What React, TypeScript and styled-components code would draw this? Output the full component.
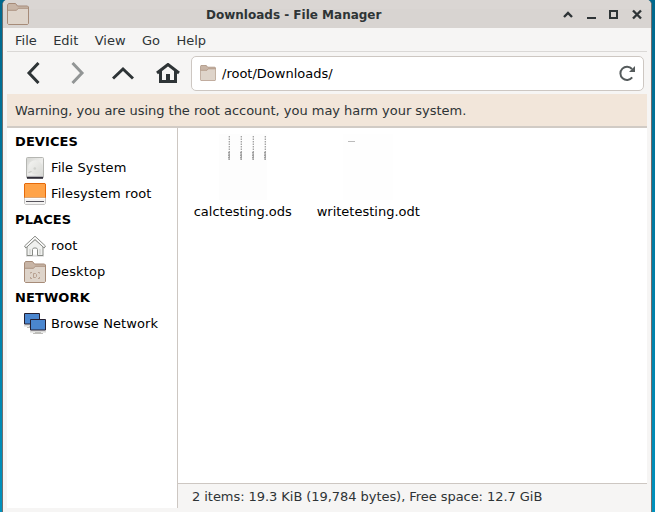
import React from "react";
import styled, { createGlobalStyle } from "styled-components";

const GlobalStyle = createGlobalStyle`
  * { box-sizing: border-box; }
  html, body { margin: 0; overflow: hidden; }
  body { font: 13px "DejaVu Sans", sans-serif; color: #2e3436; }
  svg { display: block; flex: none; }
`;

const Desktop = styled.div`
  width: 655px;
  height: 512px;
  padding: 0 3px 0 2px;
  background: linear-gradient(#00688d, #0091bd);
`;

const Window = styled.div`
  height: 512px;
  display: flex;
  flex-direction: column;
  background: #f6f5f4;
  border: solid #6f6d6c;
  border-width: 0 1px;
  border-radius: 5px 5px 0 0;
  overflow: hidden;
`;

const TitleBar = styled.header`
  height: 28px;
  flex: none;
  display: grid;
  grid-template-columns: 112px 1fr 90px;
  align-items: center;
  padding-left: 4px;
  background: linear-gradient(#dad6d3 9px, #d8d4d1 9px);
`;

const Title = styled.h1`
  margin: 0;
  padding: 1px 0 0 87px;
  font-size: 12px;
  line-height: 16px;
  font-weight: bold;
  white-space: nowrap;
`;

const WindowButtons = styled.div`
  display: flex;
  gap: 9px;
`;

const Client = styled.div`
  flex: 1;
  display: flex;
  flex-direction: column;
  margin: 0 4px;
`;

const MenuBar = styled.nav`
  height: 24px;
  display: flex;
  gap: 16.4px;
  padding: 1px 8px 0;
  line-height: 23px;
  border-bottom: 1px solid #dad8d6;
`;

const Toolbar = styled.div`
  height: 42px;
  display: flex;
  align-items: center;
  padding-right: 3px;
`;

const ToolButton = styled.button<{ $faded?: boolean }>`
  width: 45px;
  height: 42px;
  padding: 0;
  border: 0;
  background: none;
  display: grid;
  place-items: center;
  color: ${(p) => (p.$faded ? "#929595" : "#2e3436")};
`;

const ToolButtons = styled.div`
  display: flex;
  width: 184px;
  padding-left: 3px;
`;

const PathBar = styled.div`
  flex: 1;
  height: 35px;
  display: flex;
  align-items: center;
  gap: 6px;
  padding: 0 7px 1px 8px;
  margin-top: 1px;
  color: #000;
  background: #fff;
  border: 1px solid #cdc7c2;
  border-radius: 5px;
`;

const PathText = styled.span`
  flex: 1;
`;

const Warning = styled.div`
  height: 34px;
  padding: 0 8px;
  line-height: 33px;
  letter-spacing: -0.025px;
  background: #f2e6da;
  border-bottom: 2px solid #d1cbc5;
`;

const Content = styled.div`
  height: 380px;
  display: flex;
`;

const Sidebar = styled.aside`
  width: 171px;
  background: #fff;
  color: #000;
  border-right: 1px solid #cdc7c2;
`;

const Heading = styled.h2`
  margin: 0;
  padding-left: 8px;
  height: 26px;
  font-size: 13px;
  line-height: 27px;
  letter-spacing: 0.1px;
`;

const Place = styled.div`
  height: 26px;
  display: flex;
  align-items: center;
  gap: 5px;
  padding: 1px 0 0 17px;
  letter-spacing: 0.1px;
`;

const Main = styled.main`
  flex: 1;
  display: flex;
  flex-direction: column;
`;

const Files = styled.div`
  flex: 1;
  display: flex;
  padding: 6px 0 0 2px;
  background: #fff;
  color: #000;
`;

const File = styled.figure`
  width: 125.5px;
  margin: 0;
  display: flex;
  flex-direction: column;
  align-items: center;
  gap: 4px;
`;

const FileName = styled.figcaption`
  line-height: 15px;
`;

const StatusBar = styled.footer`
  height: 25px;
  padding-left: 14px;
  line-height: 25px;
  letter-spacing: -0.055px;
  border-top: 1px solid #cdc7c2;
`;

const Folder = ({ size, marked }: { size: number; marked?: boolean }) => (
  <svg width={size} height={size} viewBox="0 0 22 22">
    <path d="M.5 20.5V2L1.5.5h7L10.5 3H20.5L21.5 4v16.5l-1 1h-19z" fill="#c8b5a6" stroke="#a68b78" />
    <path d="M1 7.5h8.5L11.5 5.5H21V20.5L20.5 21h-19L1 20.5z" fill="#ded4ca" />
    <path d="M1 7.3h8.5L11.3 5.3H21" fill="none" stroke="#a68b78" strokeWidth=".8" />
    {marked && (
      <path
        d="M6.5 12.5v-1H8M14 11.5h1.5v1M6.5 16v1.5H8M14 17.5h1.5V16M9.5 12.5h2l1 1v2l-1 1h-2z"
        fill="none" stroke="#b29b8a" strokeWidth=".9"
      />
    )}
  </svg>
);

const Drive = () => (
  <svg width="22" height="22" viewBox="0 0 22 22">
    <defs>
      <linearGradient id="drive" x1="0" y1="0" x2="1" y2="1">
        <stop stopColor="#d4d5d1" /><stop offset=".55" stopColor="#efefed" /><stop offset="1" stopColor="#cfd0cc" />
      </linearGradient>
      <linearGradient id="platter" x1="0" y1="0" x2="1" y2="1">
        <stop stopColor="#f4f4f2" /><stop offset="1" stopColor="#d9dad6" />
      </linearGradient>
    </defs>
    <rect x="2.5" y=".5" width="17" height="20.5" rx="1" fill="url(#drive)" stroke="#b5b6b2" />
    <circle cx="11.3" cy="10.3" r="7" fill="url(#platter)" />
    <circle cx="10.8" cy="11.5" r="1.3" fill="#d0d1cd" />
    <path d="M4.5 15.5l3-1" stroke="#c4c5c1" />
    <path d="M3 18.5h16v1.5H3z" fill="#dcdcdc" />
    <path d="M3 20.7h16" stroke="#2e2b36" strokeWidth="2" />
  </svg>
);

const Volume = () => (
  <svg width="22" height="22" viewBox="0 0 22 22">
    <path d="M.5 15V1l.5-.5h20l.5.5v14z" fill="#ffa348" stroke="#e66a0a" />
    <path d="M.5 15h21v5.5l-1 1h-19l-1-1z" fill="#f4f3f2" stroke="#c5c4c3" />
    <path d="M1 15.5h20" stroke="#fff" />
    <path d="M2 18.5h18" stroke="#57555d" />
  </svg>
);

const UserHome = () => (
  <svg width="22" height="22" viewBox="0 0 22 22">
    <path d="M2 20.7h18" stroke="#ddd" strokeWidth="2" />
    <path d="M3 11.5l8-7 8 7v9h-5.5v-6l-1-1.5h-3l-1 1.5v6H3z" fill="#f0f1ef" stroke="#888a85" />
    <path d="M1.8 13L11 4.5l9.2 8.5 1.3-2L11 1.2.5 11z" fill="#fafafa" stroke="#888a85" />
    <path d="M6 14v5.5M16 14v5.5" stroke="#c7c8c5" />
  </svg>
);

const Monitor = ({ x, y }: { x: number; y: number }) => (
  <g transform={`translate(${x} ${y})`}>
    <path d="M5 13h6v1h2v1H3v-1h2z" fill="#bebdb9" />
    <path d="M0 11h16v2H0z" fill="#e9e9e7" />
    <path d="M0 13h16" stroke="#c1c1be" strokeWidth=".7" />
    <path d="M.5.5h15v10.5H.5z" fill="#4a86cf" stroke="#241f31" />
  </g>
);

const Network = () => (
  <svg width="22" height="22" viewBox="0 0 22 22">
    <Monitor x={0} y={0} />
    <Monitor x={6} y={6} />
  </svg>
);

const HomeGlyph = () => (
  <svg width="24" height="20" viewBox="0 0 24 20">
    <path d="M1 10L12 1.5 23 10" fill="none" stroke="currentColor" strokeWidth="3" />
    <path d="M4.5 8v10.5h15V8" fill="none" stroke="currentColor" strokeWidth="3" />
    <path d="M10 19v-8h4v8z" fill="currentColor" />
  </svg>
);

const Arrow = ({ d, w, h }: { d: string; w: number; h: number }) => (
  <svg width={w} height={h} viewBox={`0 0 ${w} ${h}`}>
    <path d={d} fill="none" stroke="currentColor" strokeWidth="3" />
  </svg>
);

const Reload = () => (
  <svg width="18" height="18" viewBox="0 0 18 18">
    <path d="M14.2 13.4A6.6 6.6 0 1 1 14 5" fill="none" stroke="#555b5c" strokeWidth="2" />
    <path d="M17 2v6h-6z" fill="#555b5c" />
  </svg>
);

const WindowGlyph = ({ children }: { children: React.ReactNode }) => (
  <svg width="14" height="14" viewBox="0 0 14 14" fill="none" stroke="#2e3436" strokeWidth="2">
    {children}
  </svg>
);

const SheetPreview = () => (
  <svg width="48" height="66" viewBox="0 0 48 66">
    <path d="M0 0h48v66H0z" fill="#fdfdfd" />
    {[10, 22, 34, 46].map((x) => (
      <g key={x} fill="none">
        <path d={`M${x + 0.5} 2v25`} stroke="#a4a4a4" strokeDasharray="1.5 1" />
        <path d={`M${x - 0.5} 2v25`} stroke="#dedede" strokeDasharray="1.5 1" />
        <path d={`M${x} 18v8`} stroke="#a0a0a0" strokeWidth="2" strokeDasharray="1.5 1" />
      </g>
    ))}
  </svg>
);

const DocumentPreview = () => (
  <svg width="50" height="66" viewBox="0 0 50 66">
    <path d="M0 0h50v66H0z" fill="#fefefe" />
    <path d="M5 7.5h7" stroke="#bbb" />
  </svg>
);

export default function App() {
  return (
    <>
      <GlobalStyle />
      <Desktop>
        <Window>
          <TitleBar>
            <Folder size={22} />
            <Title>Downloads - File Manager</Title>
            <WindowButtons>
              <WindowGlyph><path d="M3 10l4-4 4 4" strokeWidth="2.4" /></WindowGlyph>
              <WindowGlyph><path d="M3 11h9" /></WindowGlyph>
              <WindowGlyph><path d="M3 4h7v7H3z" /></WindowGlyph>
              <WindowGlyph><path d="M3 3.5l8 8M11 3.5l-8 8" strokeWidth="2.4" /></WindowGlyph>
            </WindowButtons>
          </TitleBar>
          <Client>
            <MenuBar>
              <span>File</span><span>Edit</span><span>View</span><span>Go</span><span>Help</span>
            </MenuBar>
            <Toolbar>
              <ToolButtons>
                <ToolButton aria-label="Back"><Arrow w={14} h={22} d="M12.5 1L3 11l9.5 10" /></ToolButton>
                <ToolButton aria-label="Forward" $faded><Arrow w={14} h={22} d="M1.5 1L11 11 1.5 21" /></ToolButton>
                <ToolButton aria-label="Up"><Arrow w={22} h={14} d="M1 12.5L11 3l10 9.5" /></ToolButton>
                <ToolButton aria-label="Home"><HomeGlyph /></ToolButton>
              </ToolButtons>
              <PathBar>
                <Folder size={16} />
                <PathText>/root/Downloads/</PathText>
                <Reload />
              </PathBar>
            </Toolbar>
            <Warning>Warning, you are using the root account, you may harm your system.</Warning>
            <Content>
              <Sidebar>
                <Heading>DEVICES</Heading>
                <Place><Drive />File System</Place>
                <Place><Volume />Filesystem root</Place>
                <Heading>PLACES</Heading>
                <Place><UserHome />root</Place>
                <Place><Folder size={22} marked />Desktop</Place>
                <Heading>NETWORK</Heading>
                <Place><Network />Browse Network</Place>
              </Sidebar>
              <Main>
                <Files>
                  <File><SheetPreview /><FileName>calctesting.ods</FileName></File>
                  <File><DocumentPreview /><FileName>writetesting.odt</FileName></File>
                </Files>
                <StatusBar>2 items: 19.3 KiB (19,784 bytes), Free space: 12.7 GiB</StatusBar>
              </Main>
            </Content>
          </Client>
        </Window>
      </Desktop>
    </>
  );
}
